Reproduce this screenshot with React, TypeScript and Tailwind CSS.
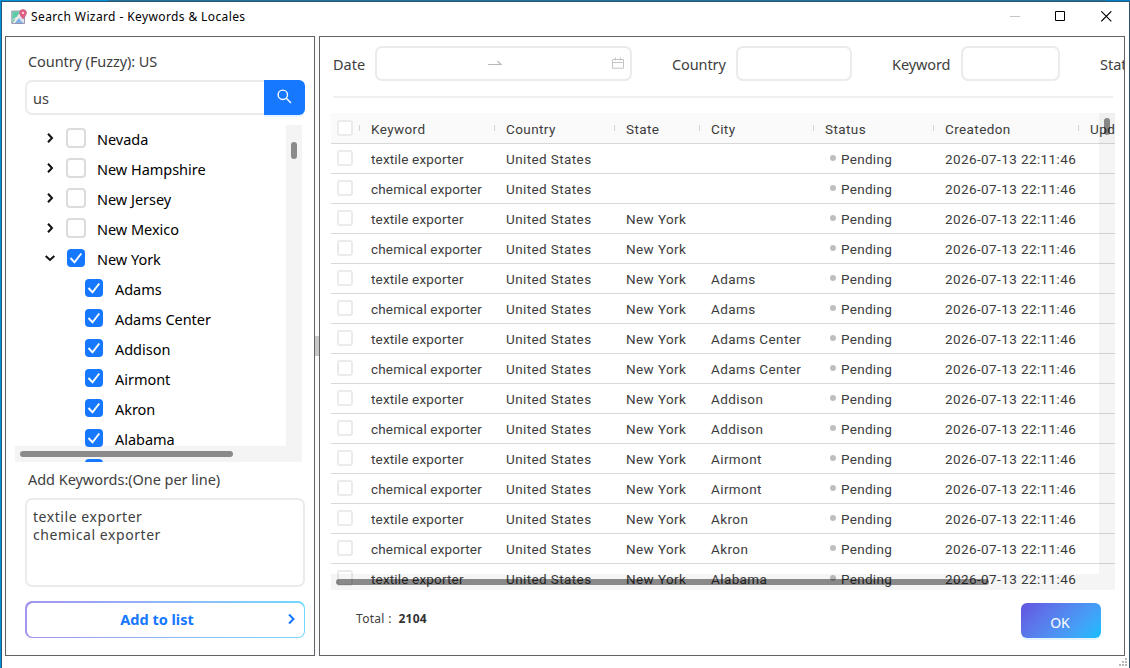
import type { ReactNode } from "react"
import clsx from "clsx"

interface TreeNode {
  label: string
  checked: boolean
  expanded?: boolean
}

const states: TreeNode[] = [
  { label: "Nevada", checked: false },
  { label: "New Hampshire", checked: false },
  { label: "New Jersey", checked: false },
  { label: "New Mexico", checked: false },
  { label: "New York", checked: true, expanded: true },
]

const cities = ["Adams", "Adams Center", "Addison", "Airmont", "Akron", "Alabama", ""]

const places = [
  { country: "United States", state: "", city: "" },
  { country: "United States", state: "New York", city: "" },
  { country: "United States", state: "New York", city: "Adams" },
  { country: "United States", state: "New York", city: "Adams Center" },
  { country: "United States", state: "New York", city: "Addison" },
  { country: "United States", state: "New York", city: "Airmont" },
  { country: "United States", state: "New York", city: "Akron" },
  { country: "United States", state: "New York", city: "Alabama" },
]

const keywords = ["textile exporter", "chemical exporter"]

// one row per place and keyword
const rows = places.flatMap((place) => keywords.map((keyword) => ({ ...place, keyword }))).slice(0, 15)

const columns = "grid grid-cols-[29px_135px_120px_85px_114px_120px_145px_36px]"

function TitleBar() {
  return (
    <div className="flex h-[34px] shrink-0 items-center pl-[9px]">
      <svg className="mt-[-4px] h-4 w-4" viewBox="0 0 16 16">
        <path d="M.8 2h12.700v12.500H.8z" fill="#dfe3f2" stroke="#8e8aa6" strokeWidth=".9" />
        <path d="M1.300 2.500H9L6 7.500l-4.700 3z" fill="#5fcba4" />
        <path d="M1.300 11.500l3-2L3 14H1.300z" fill="#6fc79f" />
        <path d="M4 14l3.500-5 4.500 5z" fill="#7db4e6" />
        <path d="M2.500 14L9 6" stroke="#f5efe4" strokeWidth="1.300" />
        <path d="M12 .5c-2 0-3.500 1.400-3.500 3.300C8.500 6 12 10 12 10s3.500-4 3.500-6.200C15.500 1.900 14 .5 12 .5z" fill="#e35f82" stroke="#a85a7c" strokeWidth=".5" />
        <circle cx="12" cy="3.900" r="1.200" fill="#fbd3dc" />
      </svg>
      <span className="-mt-1 ml-1 flex-1 text-[12px] tracking-[0.39px] text-black">Search Wizard - Keywords &amp; Locales</span>
      <div className="mt-[-6px] mr-[17px] flex items-center gap-[35px]">
        <svg className="h-[11px] w-[11px]" viewBox="0 0 11 11">
          <path d="M1 5.500h10" stroke="#c4c4c4" />
        </svg>
        <svg className="h-[11px] w-[11px]" viewBox="0 0 11 11">
          <path d="M.5.5h9v9h-9z" fill="none" stroke="#000" />
        </svg>
        <svg className="h-[11px] w-[11px]" viewBox="0 0 11 11">
          <path d="M.3.3l10 10M10.300.3l-10 10" stroke="#000" strokeWidth="1.100" />
        </svg>
      </div>
    </div>
  )
}

function TreeCheckbox({ checked }: { checked: boolean }) {
  if (!checked) {
    return <span className="h-5 w-5 rounded-[4px] border-2 border-[#dcdcdc] bg-white" />
  }
  return (
    <span className="relative z-10 mx-px flex h-[18px] w-[18px] items-center justify-center rounded-[4px] bg-[#1677ff]">
      <svg className="h-[18px] w-[18px]" viewBox="0 0 18 18">
        <path d="M3.500 9l4 4.300L14.300 4.500" fill="none" stroke="#fff" strokeWidth="1.900" />
      </svg>
    </span>
  )
}

function TreeRow({ node, child }: { node: TreeNode; child?: boolean }) {
  return (
    <div className={clsx("flex h-[30px] items-center", child ? "pl-[69px]" : "pl-[29px]")}>
      {!child && (
        <svg className="mr-[10px] h-3 w-3" viewBox="0 0 12 12">
          <path d={node.expanded ? "M1.700 4l4.300 4 4.300-4" : "M4 1.700l4 4.300-4 4.300"} fill="none" stroke="#111" strokeWidth="2" />
        </svg>
      )}
      <TreeCheckbox checked={node.checked} />
      <span className="mt-[3px] ml-[11px] text-[14.5px] tracking-[-0.03px] whitespace-nowrap text-black">{node.label}</span>
    </div>
  )
}

function LocalePanel() {
  return (
    <div className="flex w-[310px] flex-col border border-[#606266] bg-white text-[#404040]">
      <div className="mt-[14px] ml-[22px] h-5 text-[14.5px] leading-5 tracking-[-0.08px]">Country (Fuzzy): US</div>
      <div className="mt-[9px] ml-[19px] flex h-[35px] w-[280px]">
        <div className="flex flex-1 items-center rounded-l-[7px] border-2 border-r-0 border-[#ebebeb] pt-[2px] pl-[6px] text-[14.5px]">us</div>
        <button className="flex w-[41px] items-center justify-center rounded-r-[6px] bg-[#1677ff] shadow-[0_2px_0_rgba(5,145,255,0.1)]">
          <svg className="mt-[-3px] mr-[2px] h-4 w-4" viewBox="0 0 16 16" fill="none" stroke="#fff" strokeWidth="1.400">
            <circle cx="6.800" cy="6.800" r="4.700" />
            <path d="M10.300 10.300L15 15" />
          </svg>
        </button>
      </div>

      {/* Locale tree, scrollbars lie over its right and bottom edges */}
      <div className="relative mt-[10px] ml-[9px] h-[337px] w-[287px] overflow-hidden">
        <div className="mt-[-2px]">
          {states.map((node) => (
            <TreeRow key={node.label} node={node} />
          ))}
          {cities.map((city) => (
            <TreeRow key={city} node={{ label: city, checked: true }} child />
          ))}
        </div>
        <div className="absolute top-0 right-0 h-full w-4 bg-[#f4f4f4]">
          <div className="mt-[17px] ml-[5px] h-[17px] w-[6px] rounded-full bg-[#8b8b8b]" />
        </div>
        <div className="absolute bottom-0 left-0 h-4 w-full bg-[#f4f4f4]">
          <div className="mt-[5px] ml-[5px] h-[6px] w-[213px] rounded-full bg-[#8b8b8b]" />
        </div>
      </div>

      <div className="mt-[7px] ml-[22px] h-5 text-[14.5px] leading-5 tracking-[-0.04px]">Add Keywords:(One per line)</div>
      <div className="mt-[9px] ml-[19px] h-[89px] w-[280px] rounded-[7px] border-2 border-[#ebebeb] px-[6px] pt-[8px] text-[14px] leading-[18px] tracking-[0.56px]">
        textile exporter
        <br />
        chemical exporter
      </div>
      <button className="mt-[14px] ml-[19px] h-[37px] w-[280px] rounded-[7px] bg-linear-to-r from-[#a294ee] to-[#72d8ff] p-[1.500px]">
        <span className="flex h-full items-center rounded-[6px] bg-white pr-[7px] text-[14.5px] font-bold text-[#1677ff]">
          <span className="flex-1 pl-[3px] text-center">Add to list</span>
          <svg className="mt-[-2px] h-3 w-3" viewBox="0 0 12 12">
            <path d="M4 1.500l4.500 4.500L4 10.500" fill="none" stroke="#1677ff" strokeWidth="2" />
          </svg>
        </span>
      </button>
    </div>
  )
}

function Filters() {
  return (
    <div className="flex h-[35px] w-[900px] items-center text-[14.5px] text-[#404040]">
      <span className="mt-[2px] w-[42px]">Date</span>
      <div className="flex h-[35px] w-[257px] items-center rounded-[7px] border-2 border-[#ebebeb]">
        <svg className="ml-[111px] h-2 w-[14px]" viewBox="0 0 14 8">
          <path d="M0 4.500h13L9.500 1" fill="none" stroke="#b8b8b8" strokeWidth="1.200" />
        </svg>
        <svg className="mt-[-1px] ml-[110px] h-3 w-3" viewBox="0 0 12 12" fill="none" stroke="#c4c4c4">
          <path d="M.5 2.500h11v8.700H.5zM.5 5.500h11M3.500.5v3M8.500.5v3" />
        </svg>
      </div>
      <span className="mt-[2px] ml-10 w-[64px] tracking-[-0.1px]">Country</span>
      <div className="h-[35px] w-[116px] rounded-[7px] border-2 border-[#ebebeb]" />
      <span className="mt-[2px] ml-10 w-[69px] tracking-[-0.1px]">Keyword</span>
      <div className="h-[35px] w-[99px] rounded-[7px] border-2 border-[#ebebeb]" />
      <span className="mt-[2px] ml-10">State</span>
    </div>
  )
}

function HeaderCell({ children, last }: { children?: ReactNode; last?: boolean }) {
  return (
    <div className="flex h-full items-center justify-between pl-[11px] whitespace-nowrap">
      <span className="mt-[2px]">{children}</span>
      {!last && <span className="h-[6px] w-px bg-[#d4d4d4]" />}
    </div>
  )
}

function RowCheckbox() {
  return <span className="h-4 w-4 rounded-[3px] border-2 border-[#ebebeb] bg-white" />
}

function ResultTable() {
  return (
    <div className="relative h-[477px] w-[784px] overflow-hidden font-[Roboto,sans-serif] text-[13.5px] tracking-[0.4px] text-[#3c3c3c]">
      <div className={clsx(columns, "h-[31px] items-center border-b border-[#d9d9d9] bg-[#fafafa]")}>
        <div className="flex items-center justify-between pl-[6px]">
          <RowCheckbox />
          <span className="h-[6px] w-px bg-[#d4d4d4]" />
        </div>
        <HeaderCell>Keyword</HeaderCell>
        <HeaderCell>Country</HeaderCell>
        <HeaderCell>State</HeaderCell>
        <HeaderCell>City</HeaderCell>
        <HeaderCell>Status</HeaderCell>
        <HeaderCell>Createdon</HeaderCell>
        <HeaderCell last>Updatedon</HeaderCell>
      </div>
      {rows.map((row, i) => (
        <div key={i} className={clsx(columns, "h-[30px] items-center border-b border-[#d9d9d9] whitespace-nowrap")}>
          <div className="flex pb-px pl-[6px]">
            <RowCheckbox />
          </div>
          <span className="mt-[2px] pl-[11px] tracking-[0.17px]">{row.keyword}</span>
          <span className="mt-[2px] pl-[11px]">{row.country}</span>
          <span className="mt-[2px] pl-[11px]">{row.state}</span>
          <span className="mt-[2px] pl-[11px]">{row.city}</span>
          <span className="flex items-center gap-[5px] pl-[16px]">
            <span className="mt-[-2px] h-[6px] w-[6px] rounded-full bg-[#bfbfbf]" />
            <span className="mt-[2px] tracking-[0.3px]">Pending</span>
          </span>
          <span className="mt-[2px] pl-[11px]">2026-07-13 22:11:46</span>
        </div>
      ))}
      <div className="absolute top-0 right-0 h-[461px] w-4 bg-black/4">
        <div className="mt-[5px] ml-[5px] h-[17px] w-[6px] rounded-full bg-black/44" />
      </div>
      <div className="absolute bottom-0 left-0 h-4 w-full bg-black/4">
        <div className="mt-[5px] ml-[5px] h-[6px] w-[653px] rounded-full bg-black/44" />
      </div>
    </div>
  )
}

export default function App() {
  return (
    <div className="relative flex h-[668px] w-[1130px] flex-col overflow-hidden bg-white font-['Noto_Sans',sans-serif]">
      {/* Desktop and window frame */}
      <div className="flex h-px shrink-0 bg-[#23709a]">
        <div className="w-[108px] bg-[#0090d9]" />
        <div className="ml-[998px] flex-1 bg-[#0080cc]" />
      </div>
      <div className="flex min-h-0 flex-1 bg-white">
        <div className="w-px bg-[#0090d9]" />
        <div className="flex flex-1 flex-col border-t border-r border-l border-[#2b5870]">
          <TitleBar />
          <div className="flex h-[620px] pl-[3px]">
            <LocalePanel />
            <div className="flex w-1 items-center bg-[#fafafa]">
              <div className="h-5 w-full bg-[#c8c8c8]" />
            </div>
            <div className="flex w-[806px] flex-col overflow-hidden border border-[#606266] bg-white">
              <div className="mt-[9px] ml-[13px]">
                <Filters />
              </div>
              <div className="mt-[15px] ml-[13px] h-[2px] w-[780px] shrink-0 bg-[#f0f0f0]" />
              <div className="mt-[15px] ml-[11px]">
                <ResultTable />
              </div>
              <div className="mt-[13px] flex items-start justify-between pr-[23px] pl-[36px] text-[#404040]">
                <div className="mt-[7px] text-[12px] leading-[18px] tracking-[0.3px]">
                  Total :&nbsp; <b className="tracking-[0.2px] text-[#333]">2104</b>
                </div>
                <button className="h-[35px] w-20 rounded-[6px] bg-linear-135 from-[#6253e1] to-[#04befe] pt-[3px] pr-[2px] text-[14px] text-white shadow-[0_2px_0_rgba(5,145,255,0.1)]">
                  OK
                </button>
              </div>
            </div>
          </div>
        </div>
      </div>
      {/* Resize grip */}
      <svg className="absolute right-[3px] bottom-[2px] h-2 w-2" viewBox="0 0 8 8" fill="#b8b8b8">
        <path d="M6 0h2v2H6zM3 3h2v2H3zM6 3h2v2H6zM0 6h2v2H0zM3 6h2v2H3zM6 6h2v2H6z" />
      </svg>
    </div>
  )
}
